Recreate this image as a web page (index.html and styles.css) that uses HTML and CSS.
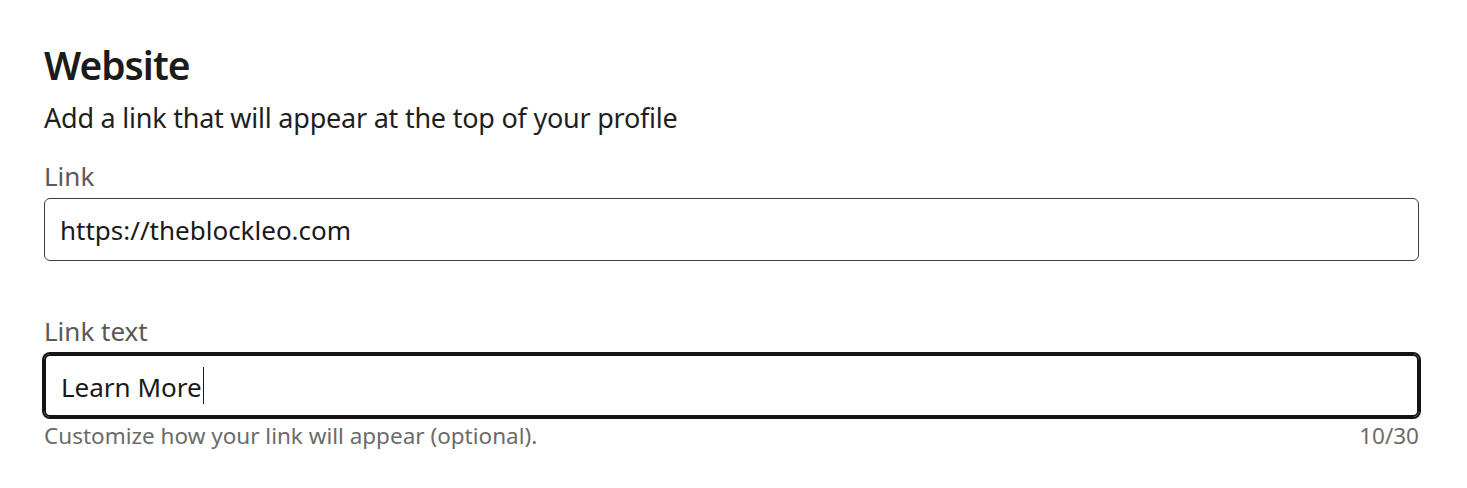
FILE: index.html
```html
<!DOCTYPE html>
<html lang="en">
<head>
<meta charset="utf-8">
<title>Website</title>
<link rel="stylesheet" href="styles.css">
</head>
<body>
<main class="section">
  <h2 class="title">Website</h2>
  <p class="subtitle">Add a link that will appear at the top of your profile</p>

  <div class="field">
    <label class="label" for="link">Link</label>
    <div class="input" id="link">https://theblockleo.com</div>
  </div>

  <div class="field field-focused">
    <label class="label" for="linktext">Link text</label>
    <div class="input input-focused" id="linktext">Learn More<span class="caret"></span></div>
    <div class="help">
      <span>Customize how your link will appear (optional).</span>
      <span>10/30</span>
    </div>
  </div>
</main>
</body>
</html>
```

FILE: styles.css
```css
html, body {
  margin: 0;
  padding: 0;
  background: #ffffff;
}
body {
  font-family: "Noto Sans", "Open Sans", sans-serif;
  color: #191919;
}
.section {
  width: 1375px;
  padding: 41px 0 0 44px;
  display: flex;
  flex-direction: column;
}
.title {
  margin: 0;
  font-size: 39px;
  line-height: 48px;
  font-weight: 600;
  letter-spacing: -1px;
  color: #1b1b1b;
}
.subtitle {
  margin: 11px 0 0;
  font-size: 27px;
  line-height: 36px;
  letter-spacing: -0.23px;
  color: #1f1f1f;
}
.field {
  display: flex;
  flex-direction: column;
  margin-top: 23px;
}
.field-focused {
  margin-top: 53px;
}
.label {
  font-size: 26px;
  line-height: 34px;
  color: #595959;
  margin-bottom: 5px;
}
.field-focused .label {
  margin-bottom: 6px;
}
.input {
  box-sizing: border-box;
  height: 63px;
  border: 1.5px solid #3f3f3f;
  border-radius: 6px;
  padding: 0 15px;
  display: flex;
  align-items: center;
  font-size: 26px;
  color: #191919;
}
.input-focused {
  border: 2px solid #141414;
  box-shadow: 0 0 0 2px #141414;
  padding-top: 3px;
}
.caret {
  display: inline-block;
  width: 1px;
  height: 37px;
  background: #191919;
  margin-left: 1px;
  margin-top: -3px;
}
.help {
  display: flex;
  justify-content: space-between;
  margin-top: 4px;
  font-size: 22.5px;
  line-height: 30px;
  color: #6b6b6b;
}
```
